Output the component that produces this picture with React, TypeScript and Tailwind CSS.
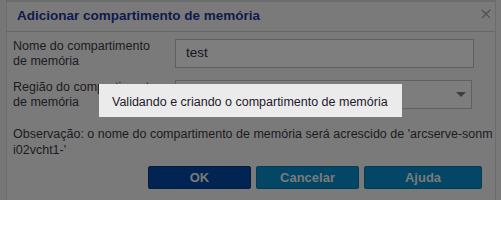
import React from 'react'

const font = { fontFamily: '"Liberation Sans", Arial, sans-serif' }

function Field({ label, children }: { label: [string, string]; children: React.ReactNode }) {
  return (
    <div className="flex items-start">
      <div className="w-[168px] pl-[6px] text-[12.5px] leading-[15px] text-[#1c1a1f]">
        {label[0]}
        <br />
        {label[1]}
      </div>
      {children}
    </div>
  )
}

function Button({ label, wide, dark }: { label: string; wide?: boolean; dark?: boolean }) {
  return (
    <button
      className={`flex h-[23px] items-center justify-center rounded-[2px] border text-[13px] font-bold text-[#7b7b7b] ${
        wide ? 'w-[118px]' : 'w-[103px]'
      } ${dark ? 'border-[#021d44] bg-[#022452]' : 'border-[#043c58] bg-[#044665]'}`}
    >
      {label}
    </button>
  )
}

export default function App() {
  return (
    <div className="relative flex h-[200px] w-[501px] overflow-hidden bg-[#797979]" style={font}>
      <div className="w-[7px] border-r border-[#6c6c6c] bg-[#767676]" />

      <div className="flex w-[489px] flex-col border-r border-t-2 border-[#6c6c6c] bg-[#7a7a7a]">
        <div className="flex h-[30px] items-center justify-between border-b border-[#666] pl-[10px] pr-[4px]">
          <span className="text-[13.5px] font-bold text-[#0f1a4e]">Adicionar compartimento de memória</span>
          <svg width="10" height="10" viewBox="0 0 10 10" className="mb-[6px]">
            <path d="M1 1L9 9M9 1L1 9" stroke="#4a4a4a" strokeWidth="1.6" strokeDasharray="1.2 0.6" />
          </svg>
        </div>

        <div className="mt-[7px] flex flex-col gap-[11px]">
          <Field label={['Nome do compartimento', 'de memória']}>
            <div className="flex h-[29px] w-[299px] items-center border border-[#606060] bg-[#7e7e7e] pl-[10px] text-[13.5px] text-[#1a1420]">
              test
            </div>
          </Field>
          <Field label={['Região do compartimento', 'de memória']}>
            <div className="flex h-[29px] w-[297px] items-center justify-end border border-[#606060] bg-[#7d7d7d] pr-[5px]">
              <svg width="10" height="6" viewBox="0 0 10 6">
                <path d="M0 0H10L5 5Z" fill="#3e3e3e" />
              </svg>
            </div>
          </Field>
        </div>

        <p className="mt-[16px] whitespace-nowrap pl-[6px] text-[12.5px] leading-[16px] text-[#1c1a1f]">
          Observação: o nome do compartimento de memória será acrescido de 'arcserve-sonm
          <br />
          i02vcht1-'
        </p>

        <div className="mt-[8px] flex gap-[5px] pl-[141px]">
          <Button label="OK" dark />
          <Button label="Cancelar" />
          <Button label="Ajuda" wide />
        </div>
      </div>

      <div className="absolute left-[99px] top-[84px] h-[33px] w-[303px] bg-[#ebebeb] pl-[13px] pt-[9px] text-[12.5px] text-[#1d1a2e]">
        Validando e criando o compartimento de memória
      </div>
    </div>
  )
}
